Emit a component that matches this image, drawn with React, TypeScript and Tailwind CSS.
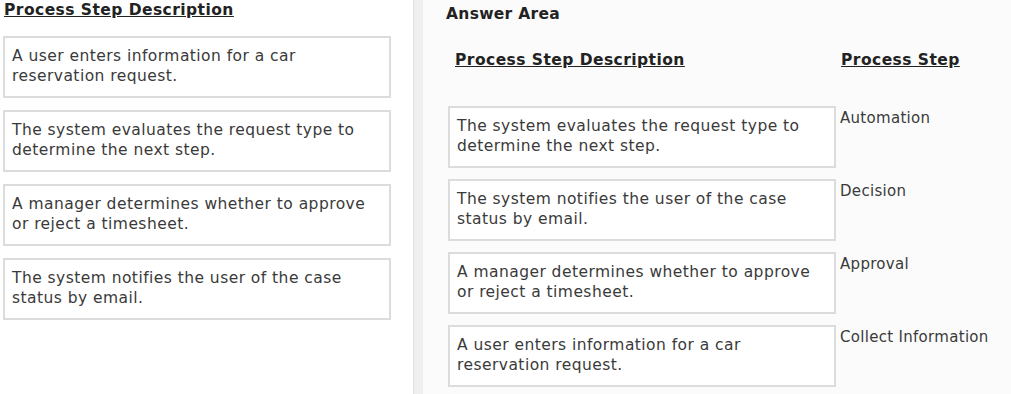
import React from 'react';

const leftItems = [
  'A user enters information for a car reservation request.',
  'The system evaluates the request type to determine the next step.',
  'A manager determines whether to approve or reject a timesheet.',
  'The system notifies the user of the case status by email.',
];

const answers = [
  { text: 'The system evaluates the request type to determine the next step.', step: 'Automation' },
  { text: 'The system notifies the user of the case status by email.', step: 'Decision' },
  { text: 'A manager determines whether to approve or reject a timesheet.', step: 'Approval' },
  { text: 'A user enters information for a car reservation request.', step: 'Collect Information' },
];

const StepBox = ({ text }: { text: string }) => (
  <div className="h-[62px] w-[388px] border-2 border-[#dcdcdc] bg-white pl-[7px] pr-[20px] pt-[8px] text-[15.5px] leading-[20px] tracking-[0.45px] text-[#3a3a3a]">
    {text}
  </div>
);

export default function App() {
  return (
    <div
      className="flex h-[394px] w-[1011px] bg-[#fbfbfb] text-[#333]"
      style={{ fontFamily: '"DejaVu Sans", Verdana, sans-serif' }}
    >
      <div className="w-[413px] bg-white pl-[3px] pt-[1px]">
        <h2 className="pl-[1px] text-[15.5px] font-bold leading-[18px] tracking-[0.45px] text-[#222] underline">
          Process Step Description
        </h2>
        <div className="mt-[17px] flex flex-col gap-[12px]">
          {leftItems.map((t) => (
            <StepBox key={t} text={t} />
          ))}
        </div>
      </div>

      <div className="w-[10px] border-l border-[#e2e2e2] bg-[#efefef]" />

      <div className="flex-1 pl-[23px] pt-[5px]">
        <h2 className="text-[15.5px] font-bold leading-[18px] tracking-[0.3px] text-[#222]">Answer Area</h2>
        <div className="mt-[28px] flex pl-[9px]">
          <div className="w-[386px] text-[15.5px] font-bold leading-[18px] tracking-[0.45px] text-[#222] underline">
            Process Step Description
          </div>
          <div className="text-[15.5px] font-bold leading-[18px] tracking-[0.45px] text-[#222] underline">
            Process Step
          </div>
        </div>
        <div className="mt-[37px] flex flex-col gap-[11px] pl-[2px]">
          {answers.map((a) => (
            <div key={a.step} className="flex">
              <StepBox text={a.text} />
              <div className="pl-[4px] pt-[3px] text-[15px] leading-[18px] tracking-[0.3px] text-[#3a3a3a]">
                {a.step}
              </div>
            </div>
          ))}
        </div>
      </div>
    </div>
  );
}
